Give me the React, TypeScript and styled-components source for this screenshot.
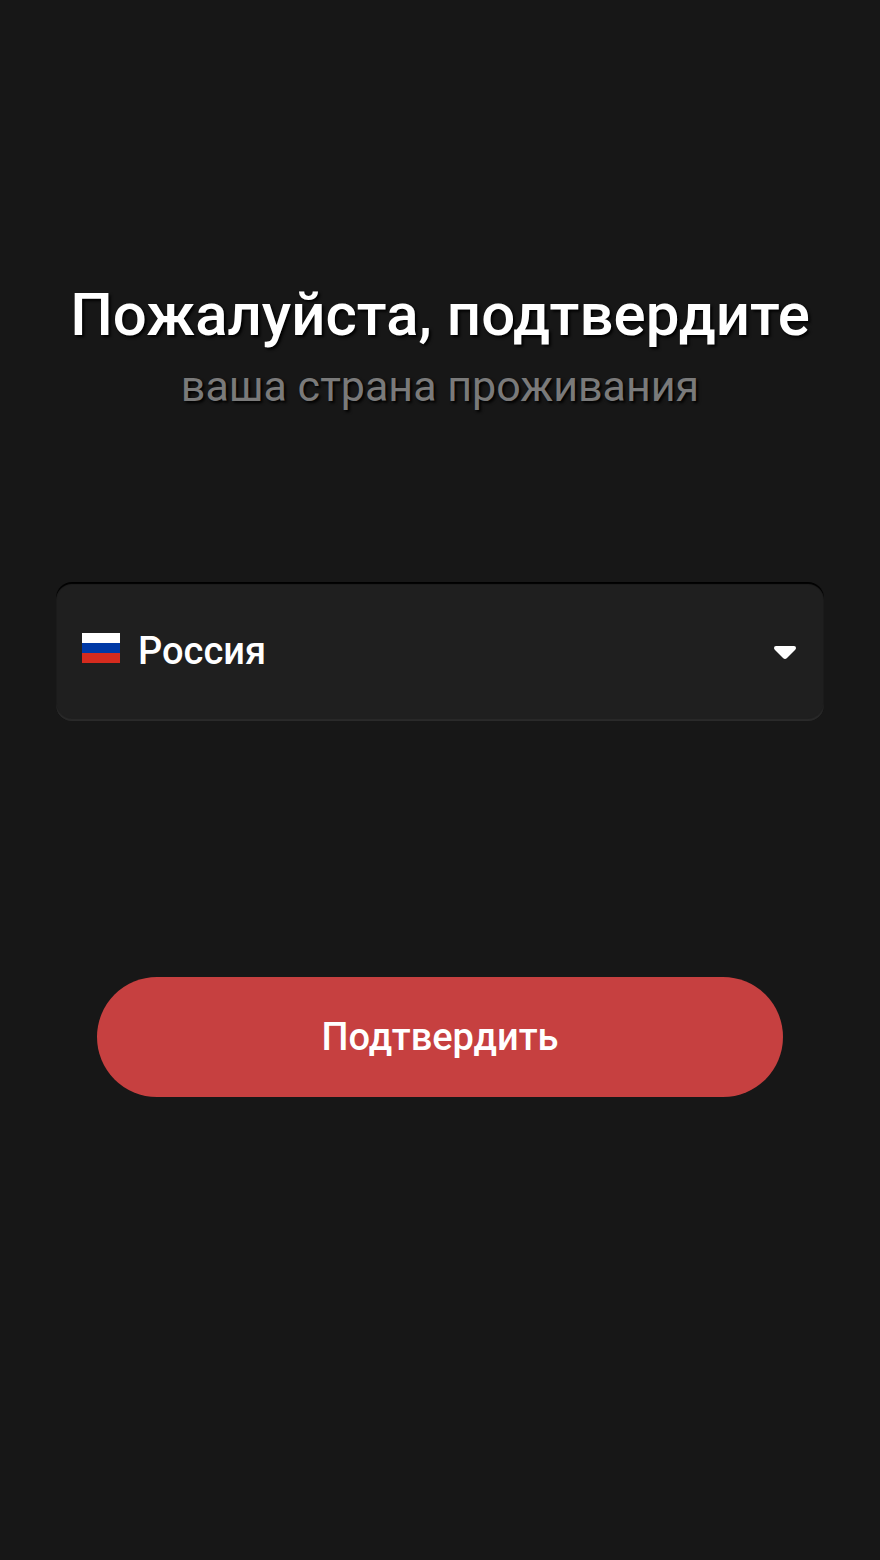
import React, { useState } from 'react';
import styled, { createGlobalStyle } from 'styled-components';

const GlobalStyle = createGlobalStyle`
  *, *::before, *::after { box-sizing: border-box; }
  body {
    margin: 0;
    background: #171717;
    color: #ffffff;
    font-family: Roboto, 'Liberation Sans', sans-serif;
  }
`;

const Page = styled.main`
  display: flex;
  flex-direction: column;
  min-height: 100vh;
  padding: 279px 56px 80px;
`;

const Header = styled.header`
  margin: 0 -40px;
  text-align: center;
  text-shadow: 2px 2px 3px #000000;
`;

const Title = styled.h1`
  margin: 0;
  font-size: 60px;
  font-weight: 500;
  line-height: 72px;
`;

const Subtitle = styled.p`
  margin: 9px 0 0;
  color: #7a7a7a;
  font-size: 43px;
  line-height: 52px;
`;

const Form = styled.form`
  display: flex;
  flex-direction: column;
  gap: 256px;
  margin-top: 170px;
`;

const Field = styled.div`
  display: grid;
  grid-template-columns: 38px 1fr 24px;
  align-items: center;
  border-radius: 16px;
  background: #1f1f1f;
  box-shadow: inset 0 2px 1px #000000, inset 0 -2px 1px #2a2a2a;

  svg {
    z-index: 1;
    grid-row: 1;
    pointer-events: none;
  }
`;

const Flag = styled.svg`
  grid-column: 1;
  width: 38px;
  height: 30px;
  margin: 0 0 8px 26px;
`;

const Caret = styled.svg`
  grid-column: 3;
  width: 24px;
  height: 16px;
  justify-self: end;
  margin: 2px 27px 0 0;
`;

const CountrySelect = styled.select`
  grid-row: 1;
  grid-column: 1 / -1;
  width: 100%;
  height: 139px;
  padding: 0 80px 2px 82px;
  border: 0;
  border-radius: 16px;
  appearance: none;
  background: transparent;
  color: #ffffff;
  font: 500 38px/48px Roboto, 'Liberation Sans', sans-serif;
  cursor: pointer;

  option { background: #1f1f1f; }
`;

const ConfirmButton = styled.button`
  height: 120px;
  margin: 0 41px;
  border: 0;
  border-radius: 60px;
  background: #c64040;
  color: #ffffff;
  font: 500 38px/48px Roboto, 'Liberation Sans', sans-serif;
  cursor: pointer;
`;

export default function App() {
  const [country, setCountry] = useState('ru');

  return (
    <>
      <GlobalStyle />
      <Page>
        <Header>
          <Title>Пожалуйста, подтвердите</Title>
          <Subtitle id="country-label">ваша страна проживания</Subtitle>
        </Header>
        <Form onSubmit={(event) => event.preventDefault()}>
          <Field>
            <Flag viewBox="0 0 38 30" aria-hidden="true">
              <path fill="#ffffff" d="M0 0h38v10H0z" />
              <path fill="#0039a6" d="M0 10h38v10H0z" />
              <path fill="#d52b1e" d="M0 20h38v10H0z" />
            </Flag>
            <CountrySelect
              aria-labelledby="country-label"
              value={country}
              onChange={(event) => setCountry(event.target.value)}
            >
              <option value="ru">Россия</option>
            </CountrySelect>
            <Caret viewBox="0 0 24 16" aria-hidden="true">
              <path
                fill="#ffffff"
                d="M3 1h18q2 0 2 2q0 1-1 2l-8 8q-2 2-4 0L2 5Q1 4 1 3q0-2 2-2z"
              />
            </Caret>
          </Field>
          <ConfirmButton type="submit">Подтвердить</ConfirmButton>
        </Form>
      </Page>
    </>
  );
}
